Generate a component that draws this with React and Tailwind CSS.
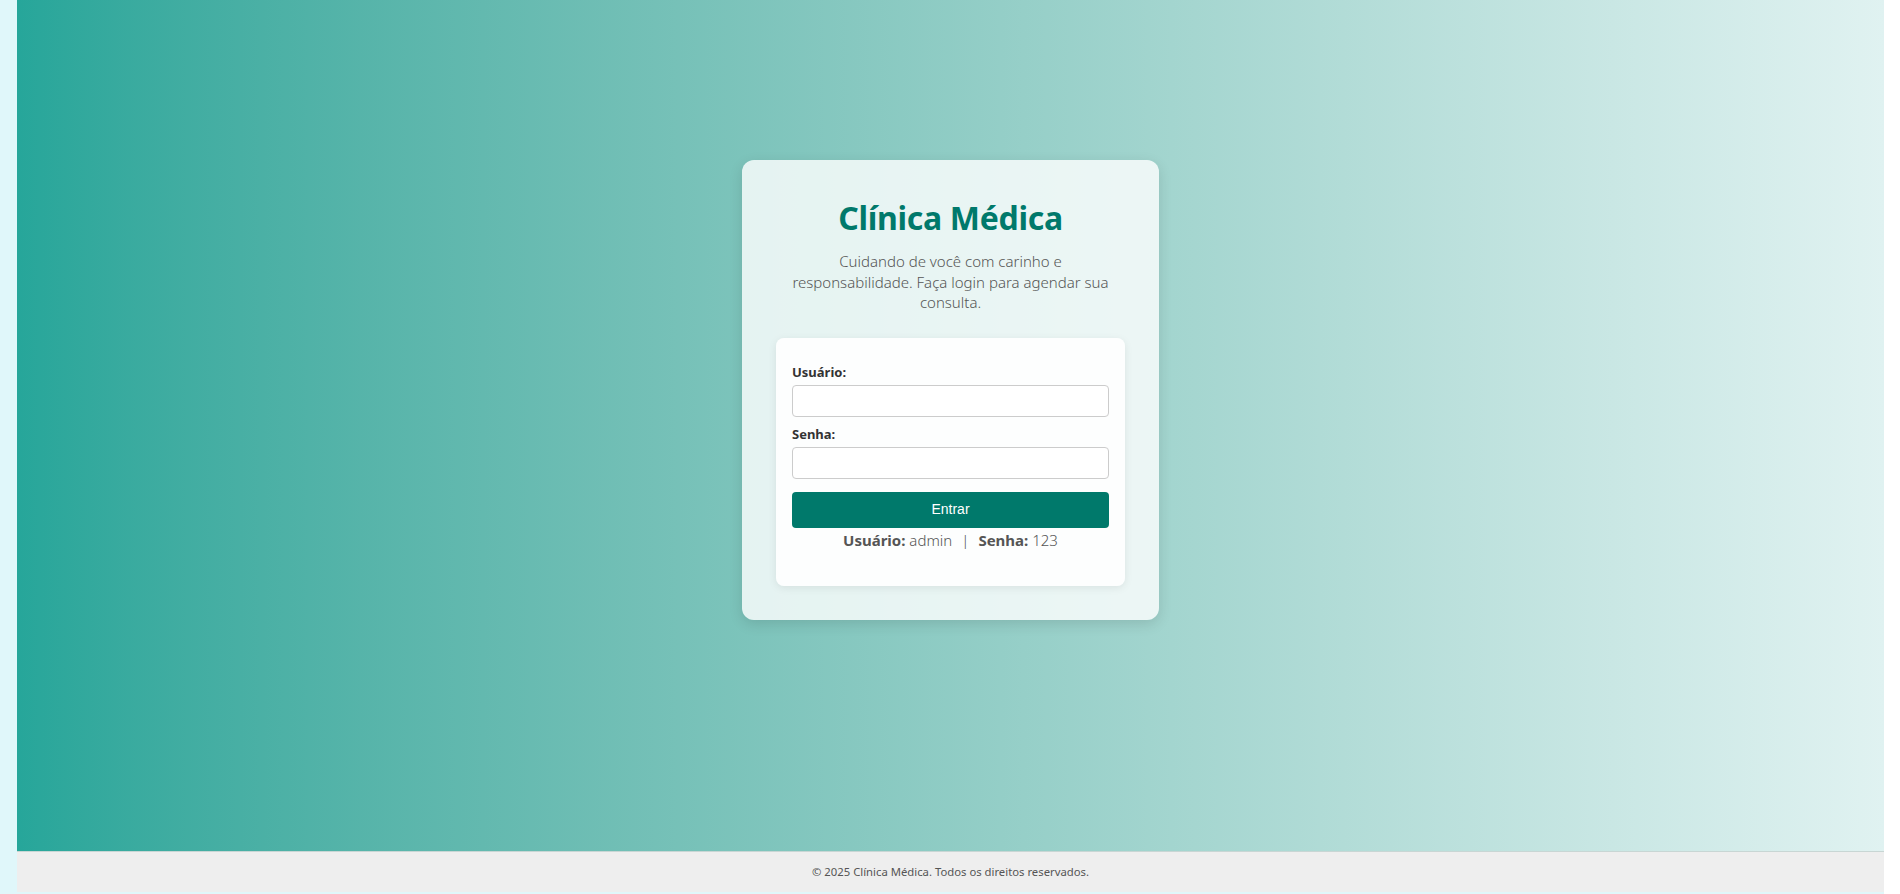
import React from 'react';

const font = { fontFamily: '"Noto Sans", "Open Sans", sans-serif' };

const LoginCard = () => {
  return (
    <div className="mx-auto w-[417px] rounded-xl bg-white/80 p-[34px] text-center shadow-[0_4px_14px_rgba(0,0,0,0.12)]">
      {/* ===== HEADER ===== */}
      <h1 className="pt-[3px] text-[32px] font-bold leading-[42px] tracking-[-0.3px] text-[#00796b] font-['Noto_Sans',sans-serif]">
        Clínica Médica
      </h1>
      <p className="mt-[12px] text-[15px] font-light leading-[20.5px] text-[#555] font-['Noto_Sans',sans-serif]">
        Cuidando de você com carinho e<br />
        responsabilidade. Faça login para agendar sua<br />
        consulta.
      </p>

      {/* ===== FORM ===== */}
      <form
        className="mt-[25px] rounded-lg bg-white/90 px-4 pt-[25px] pb-[34px] text-left shadow-[0_2px_8px_rgba(0,0,0,0.08)]"
        onSubmit={(e) => e.preventDefault()}
      >
        <label className="mb-[3px] block text-[13px] font-bold leading-[19px] text-[#333] font-['Noto_Sans',sans-serif]">
          Usuário:
        </label>
        <input
          type="text"
          className="block h-[32px] w-full rounded-[4px] border border-[#ccc] bg-white px-2"
        />
        <label className="mt-[8px] mb-[3px] block text-[13px] font-bold leading-[19px] text-[#333] font-['Noto_Sans',sans-serif]">
          Senha:
        </label>
        <input
          type="password"
          className="block h-[32px] w-full rounded-[4px] border border-[#ccc] bg-white px-2"
        />
        <button
          type="submit"
          className="mt-[13px] block h-[36px] w-full rounded-[4px] bg-[#00796b] text-[14px] text-white font-['Liberation_Sans',Arial,sans-serif]"
        >
          Entrar
        </button>
        <p className="text-center text-[15px] leading-[24px] text-[#555] font-['Noto_Sans',sans-serif]">
          <strong className="font-bold">Usuário:</strong> <span className="font-light">admin</span>
          <span className="mx-[9px] font-light">|</span>
          <strong className="font-bold">Senha:</strong> <span className="font-light">123</span>
        </p>
      </form>
    </div>
  );
};

export default function App() {
  return (
    <div className="flex h-[894px] w-full overflow-hidden bg-white" style={font}>
      <div className="w-[17px] shrink-0 bg-[#e0f7fa]" />

      <div className="flex flex-1 flex-col bg-[#e0f7fa]">
        {/* ===== MAIN ===== */}
        <main className="h-[851px] shrink-0 bg-gradient-to-r from-[#26a69a] to-[#e0f2f1] pt-[160px]">
          <LoginCard />
        </main>

        {/* ===== FOOTER ===== */}
        <footer className="flex h-[41px] shrink-0 items-center justify-center border-t border-[#c8d6d4] bg-[#eeeeee] text-[11.3px] text-[#555] font-['Noto_Sans',sans-serif]">
          © 2025 Clínica Médica. Todos os direitos reservados.
        </footer>
      </div>

      <div className="w-[16px] shrink-0 bg-white" />
    </div>
  );
}
